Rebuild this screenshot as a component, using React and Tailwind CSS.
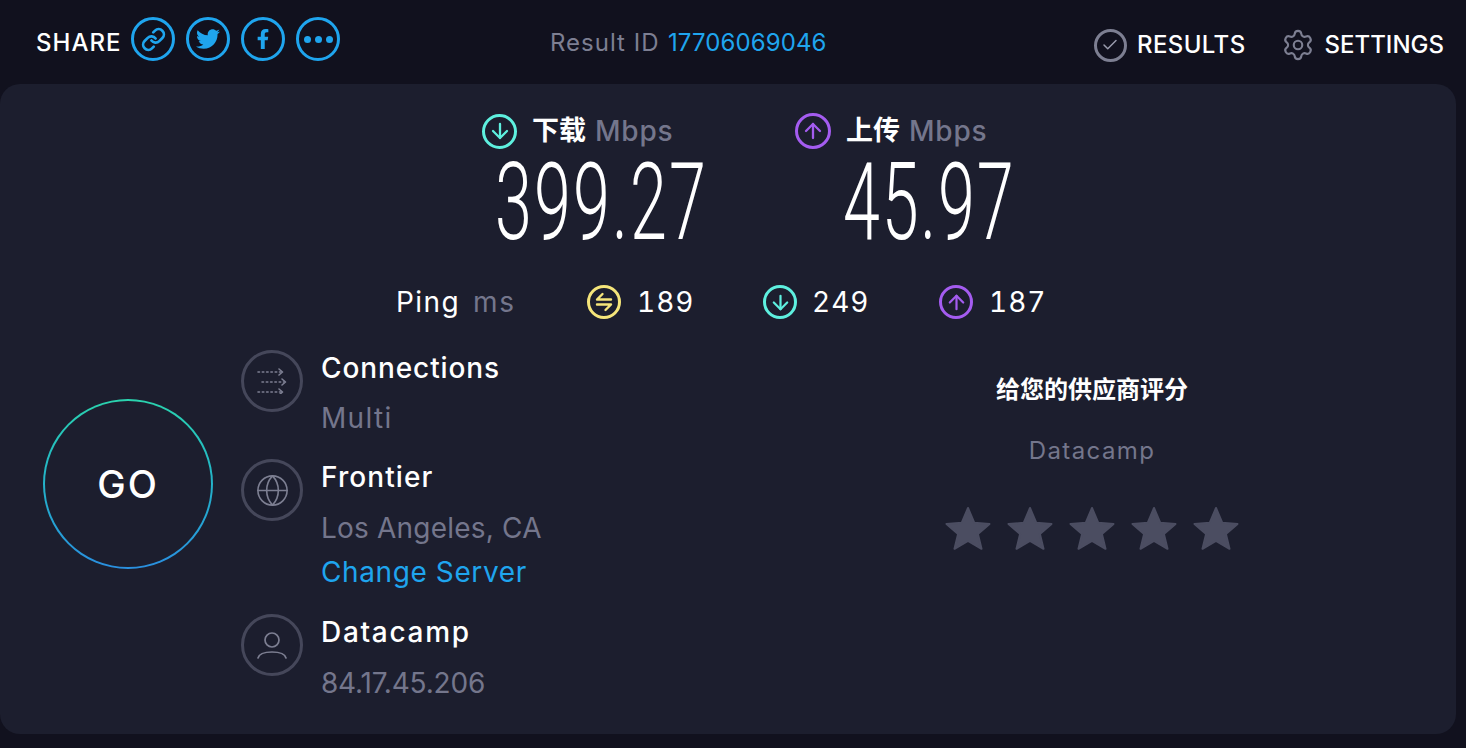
import React from "react";
import { FaTwitter, FaFacebookF } from "react-icons/fa";
import { Link, Check, Settings, Globe, ArrowDown, ArrowUp } from "lucide-react";

const font = { fontFamily: '"Inter","Noto Sans CJK SC",sans-serif' };

function Share({ children }) {
  return <div className="flex h-[44px] w-[44px] items-center justify-center rounded-full border-[3px] border-[#1fa5ee] text-[#1fa5ee]">{children}</div>;
}
function Ring({ color, size, children }) {
  return <div className={`flex shrink-0 items-center justify-center rounded-full border-[3px] ${size} ${color}`}>{children}</div>;
}
function SwapIcon() {
  return (
    <svg viewBox="0 0 24 24" width="24" height="24" fill="none" stroke="currentColor" strokeWidth="2.4" strokeLinecap="round" strokeLinejoin="round">
      <path d="M19 9.500H5l5.500-5.500" />
      <path d="M5 14.500h14l-5.500 5.500" />
    </svg>
  );
}
function ConnIcon() {
  return (
    <svg viewBox="0 0 30 26" width="30" height="26" fill="none" stroke="#7d7f92" strokeWidth="1.6" strokeLinecap="round" strokeLinejoin="round">
      <path d="M1 4h23" strokeDasharray="1.5 2.800" />
      <path d="M22 1l3.500 3-3.500 3" />
      <path d="M5 14h22" strokeDasharray="1.5 2.800" />
      <path d="M25 11l3.500 3-3.500 3" />
      <path d="M1 24h23" strokeDasharray="1.5 2.800" />
      <path d="M22 21l3.500 3-3.500 3" />
    </svg>
  );
}
function UserIcon() {
  return (
    <svg viewBox="0 0 30 27" width="30" height="27" fill="none" stroke="#7d7f92" strokeWidth="1.7" strokeLinecap="round">
      <circle cx="15" cy="8" r="7" />
      <path d="M1 26c1-4 7-6 14-6s13 2 14 6" />
    </svg>
  );
}
function Star() {
  return (
    <svg viewBox="0 0 46 44" width="46" height="44" className="shrink-0">
      <path d="M23 2l6.300 14.800 15.200 1.200-11.600 10 3.600 14.800L23 35l-13.500 7.800 3.600-14.800L1.500 18l15.200-1.200z" fill="#4b4d61" stroke="#4b4d61" strokeWidth="2" strokeLinejoin="round" />
    </svg>
  );
}
function Info({ icon, title, track, mbTop, children }) {
  return (
    <div className={`flex ${mbTop}`}>
      <Ring color="border-[#45475a]" size="h-[62px] w-[62px]">{icon}</Ring>
      <div className="ml-[18px]">
        <div className={`h-[36px] text-[28px] leading-[36px] font-medium text-white ${track}`}>{title}</div>
        {children}
      </div>
    </div>
  );
}

export default function App() {
  return (
    <div style={font} className="h-[748px] w-[1466px] overflow-hidden bg-[#11111e]">
      <header className="flex h-[84px] items-start">
        <div className="flex w-[550px] items-center pt-[17px] pl-[36px]">
          <span className="mt-[8px] w-[95px] text-[24px] leading-[30px] font-medium tracking-[1px] text-white">SHARE</span>
          <div className="flex gap-[11px]">
            <Share><Link size={25} strokeWidth={2.6} /></Share>
            <Share><FaTwitter size={24} /></Share>
            <Share><FaFacebookF size={20} /></Share>
            <Share>
              <div className="flex gap-[4px]">
                <span className="h-[7px] w-[7px] rounded-full bg-[#1fa5ee]" />
                <span className="h-[7px] w-[7px] rounded-full bg-[#1fa5ee]" />
                <span className="h-[7px] w-[7px] rounded-full bg-[#1fa5ee]" />
              </div>
            </Share>
          </div>
        </div>
        <div className="flex pt-[28px] text-[24px] leading-[30px] text-[#7d7f92]">
          <span className="w-[118px] tracking-[1px]">Result ID</span>
          <span className="tracking-[0.1px] text-[#1fa5ee]">17706069046</span>
        </div>
        <div className="ml-auto flex items-center pt-[28px] pr-[22px]">
          <Ring color="border-[#7d7f92]" size="h-[33px] w-[33px] border-[2px]"><Check size={18} color="#9a9cad" strokeWidth={2} /></Ring>
          <span className="ml-[10px] text-[24px] leading-[32px] font-medium tracking-[0.4px] text-white">RESULTS</span>
          <Settings size={34} color="#7d7f92" strokeWidth={1.5} className="ml-[35px]" />
          <span className="ml-[10px] text-[24px] leading-[32px] font-medium text-white">SETTINGS</span>
        </div>
      </header>

      <main className="h-[650px] w-[1456px] rounded-[20px] bg-[#1c1e2e]">
        <section className="flex pt-[29px] pl-[482px]">
          <div className="w-[313px]">
            <div className="flex h-[36px] items-center">
              <Ring color="border-[#5ef0df] text-[#5ef0df]" size="h-[35px] w-[35px]"><ArrowDown size={24} strokeWidth={2.3} /></Ring>
              <span className="ml-[15px] w-[54px] text-[27px] font-semibold text-white">下载</span>
              <span className="ml-[9px] text-[28px] font-medium tracking-[0.8px] text-[#74768c]">Mbps</span>
            </div>
            <div className="mt-[14px] ml-[13px] h-[78px] origin-left scale-x-[0.615] text-[108px] leading-[78px] font-light tracking-[3.5px] whitespace-nowrap text-white" style={{ fontFamily: "Roboto,sans-serif" }}>399.27</div>
          </div>
          <div>
            <div className="flex h-[36px] items-center">
              <Ring color="border-[#a45cf0] text-[#a45cf0]" size="h-[36px] w-[36px]"><ArrowUp size={24} strokeWidth={2.3} /></Ring>
              <span className="ml-[15px] w-[54px] text-[27px] font-semibold text-white">上传</span>
              <span className="ml-[9px] text-[28px] font-medium tracking-[0.8px] text-[#74768c]">Mbps</span>
            </div>
            <div className="mt-[14px] ml-[48px] h-[78px] origin-left scale-x-[0.615] text-[108px] leading-[78px] font-light tracking-[3px] whitespace-nowrap text-white" style={{ fontFamily: "Roboto,sans-serif" }}>45.97</div>
          </div>
        </section>

        <section className="mt-[43px] flex h-[36px] items-center pl-[396px] text-[28px] text-white">
          <span className="w-[77px] tracking-[1.4px]">Ping</span>
          <span className="w-[114px] tracking-[1.6px] text-[#74768c]">ms</span>
          <Ring color="border-[#f5e57a] text-[#f5e57a]" size="h-[34px] w-[34px]"><SwapIcon /></Ring>
          <span className="ml-[16px] w-[126px] tracking-[1px] tabular-nums">189</span>
          <Ring color="border-[#5ef0df] text-[#5ef0df]" size="h-[34px] w-[34px]"><ArrowDown size={23} strokeWidth={2.3} /></Ring>
          <span className="ml-[15px] w-[127px] tracking-[1px] tabular-nums">249</span>
          <Ring color="border-[#a45cf0] text-[#a45cf0]" size="h-[34px] w-[34px]"><ArrowUp size={23} strokeWidth={2.3} /></Ring>
          <span className="ml-[16px] tracking-[1px] tabular-nums">187</span>
        </section>

        <section className="mt-[30px] flex">
          <div className="mt-[49px] ml-[43px] h-[170px] w-[170px] shrink-0 rounded-full bg-gradient-to-b from-[#2bd3ae] to-[#2a8fdf] p-[2px]">
            <div className="flex h-full w-full items-center justify-center rounded-full bg-[#1c1e2e] text-[38px] font-medium tracking-[2px] text-white">GO</div>
          </div>
          <div className="ml-[28px] w-[560px]">
            <Info icon={<ConnIcon />} title="Connections" track="tracking-[0.9px]">
              <div className="mt-[14px] text-[28px] leading-[36px] tracking-[1.3px] text-[#74768c]">Multi</div>
            </Info>
            <Info icon={<Globe size={35} color="#7d7f92" strokeWidth={1.1} />} title="Frontier" track="tracking-[1.1px]" mbTop="mt-[23px]">
              <div className="mt-[15px] text-[28px] leading-[36px] tracking-[0.2px] text-[#74768c]">Los Angeles, CA</div>
              <div className="mt-[8px] text-[28px] leading-[36px] tracking-[0.6px] text-[#1fa5ee]">Change Server</div>
            </Info>
            <Info icon={<UserIcon />} title="Datacamp" track="tracking-[1.7px]" mbTop="mt-[24px]">
              <div className="mt-[15px] text-[28px] leading-[36px] tracking-[-0.2px] text-[#74768c]">84.17.45.206</div>
            </Info>
          </div>
          <div className="flex w-[582px] flex-col items-center pt-[23px]">
            <div className="text-[24px] leading-[34px] font-bold text-white">给您的供应商评分</div>
            <div className="mt-[27px] text-[24px] leading-[34px] tracking-[1.4px] text-[#74768c]">Datacamp</div>
            <div className="mt-[38px] flex gap-[16px]">
              <Star /><Star /><Star /><Star /><Star />
            </div>
          </div>
        </section>
      </main>
    </div>
  );
}
